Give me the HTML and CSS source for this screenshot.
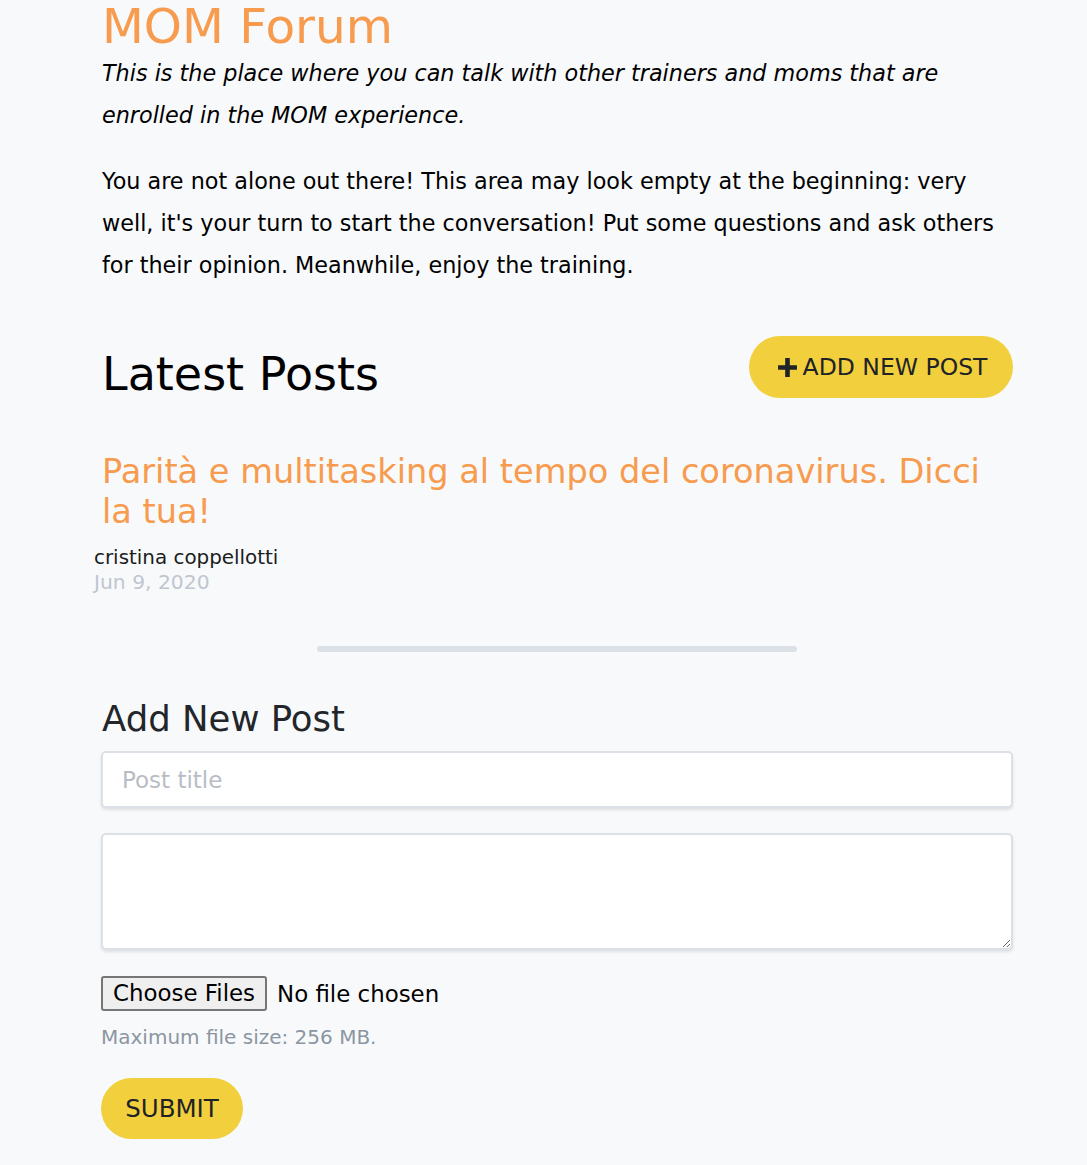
FILE: index.html
```html
<!DOCTYPE html>
<html lang="en">
<head>
<meta charset="utf-8">
<title>MOM Forum</title>
<link rel="stylesheet" href="styles.css">
</head>
<body>
<main class="page">
  <header class="intro">
    <h1 class="forum-title">MOM Forum</h1>
    <p class="lead">This is the place where you can talk with other trainers and moms that are enrolled in the MOM experience.</p>
    <p class="body-text">You are not alone out there! This area may look empty at the beginning: very well, it's your turn to start the conversation! Put some questions and ask others for their opinion. Meanwhile, enjoy the training.</p>
  </header>

  <section class="posts">
    <div class="posts-head">
      <h2 class="posts-title">Latest Posts</h2>
      <button class="btn btn-add" type="button">
        <svg class="plus" viewBox="0 0 20 20" width="21" height="21" aria-hidden="true"><path d="M7.8 1h4.4v6.8H19v4.4h-6.8V19H7.8v-6.8H1V7.8h6.8z" fill="#1f2328"/></svg>
        <span>ADD NEW POST</span>
      </button>
    </div>
    <article class="post">
      <h3 class="post-title">Parità e multitasking al tempo del coronavirus. Dicci la tua!</h3>
      <div class="post-author">cristina coppellotti</div>
      <div class="post-date">Jun 9, 2020</div>
    </article>
  </section>

  <hr class="divider">

  <section class="new-post">
    <h2 class="new-title">Add New Post</h2>
    <form class="form">
      <input class="field" type="text" placeholder="Post title">
      <textarea class="field area"></textarea>
      <div class="file-row">
        <span class="file-btn">Choose Files</span>
        <span class="file-none">No file chosen</span>
      </div>
      <p class="hint">Maximum file size: 256 MB.</p>
      <button class="btn btn-submit" type="button">SUBMIT</button>
    </form>
  </section>
</main>
</body>
</html>
```

FILE: styles.css
```css
* { box-sizing: border-box; }
html, body { margin: 0; padding: 0; }
body {
  background: #f8f9fb;
  font-family: "DejaVu Sans", "Open Sans", sans-serif;
  color: #000;
}
.page {
  width: 911px;
  margin-left: 102px;
}
.forum-title {
  margin: 0;
  font-size: 48.5px;
  font-weight: 400;
  line-height: 52px;
  color: #f79b4f;
}
.lead {
  margin: 0;
  font-size: 22.3px;
  font-style: italic;
  line-height: 42px;
}
.body-text {
  margin: 24px 0 0 0;
  font-size: 22.3px;
  line-height: 42px;
  color: #000;
}
.posts-head {
  display: flex;
  justify-content: space-between;
  align-items: flex-start;
  margin-top: 50px;
}
.posts-title {
  margin: 8px 0 0 0;
  font-size: 46px;
  font-weight: 400;
  line-height: 60px;
}
.btn {
  border: none;
  background: #f2cf3c;
  border-radius: 31px;
  font-family: inherit;
  color: #1f2328;
  cursor: pointer;
}
.btn-add {
  width: 264px;
  height: 62px;
  display: flex;
  align-items: center;
  justify-content: center;
  gap: 5px;
  font-size: 23.5px;
  padding: 0 0 0 2px;
}
.plus { display: block; }
.post { margin-top: 48px; }
.post-title {
  margin: 0;
  font-size: 33.6px;
  font-weight: 400;
  line-height: 40px;
  color: #f79b4f;
}
.post-author {
  margin: 14px 0 0 -8px;
  font-size: 19.9px;
  line-height: 24px;
  color: #1a1d21;
}
.post-date {
  margin-left: -8px;
  font-size: 20.3px;
  line-height: 24px;
  color: #c0c6cf;
}
.divider {
  width: 480px;
  height: 6px;
  border: none;
  border-radius: 3px;
  background: #dce1e7;
  margin: 52px 0 0 215px;
}
.new-post { margin-top: 45px; }
.new-title {
  margin: 0;
  font-size: 35.5px;
  font-weight: 400;
  line-height: 44px;
  color: #22252a;
}
.form {
  display: flex;
  flex-direction: column;
  align-items: flex-start;
  margin-left: -1px;
}
.field {
  width: 912px;
  height: 57px;
  margin-top: 10px;
  border: 2px solid #dce1e7;
  border-radius: 5px;
  background: #fff;
  box-shadow: 0 2px 3px rgba(30, 40, 60, 0.12);
  padding: 0 19px;
  font-family: inherit;
  font-size: 23px;
  color: #222;
}
.field::placeholder { color: #b8bdc4; }
.area {
  height: 117px;
  margin-top: 25px;
  resize: vertical;
}
.file-row {
  display: flex;
  align-items: center;
  gap: 10px;
  margin-top: 26px;
  font-size: 22.9px;
}
.file-btn {
  display: inline-block;
  height: 35px;
  line-height: 31px;
  padding: 0 10px;
  border: 2px solid #767676;
  border-radius: 3px;
  background: #efefef;
}
.hint {
  margin: 13px 0 0 0;
  font-size: 20px;
  line-height: 26px;
  color: #8b96a2;
}
.btn-submit {
  margin-top: 28px;
  width: 142px;
  height: 61px;
  font-size: 24.5px;
  padding: 0;
}
```
